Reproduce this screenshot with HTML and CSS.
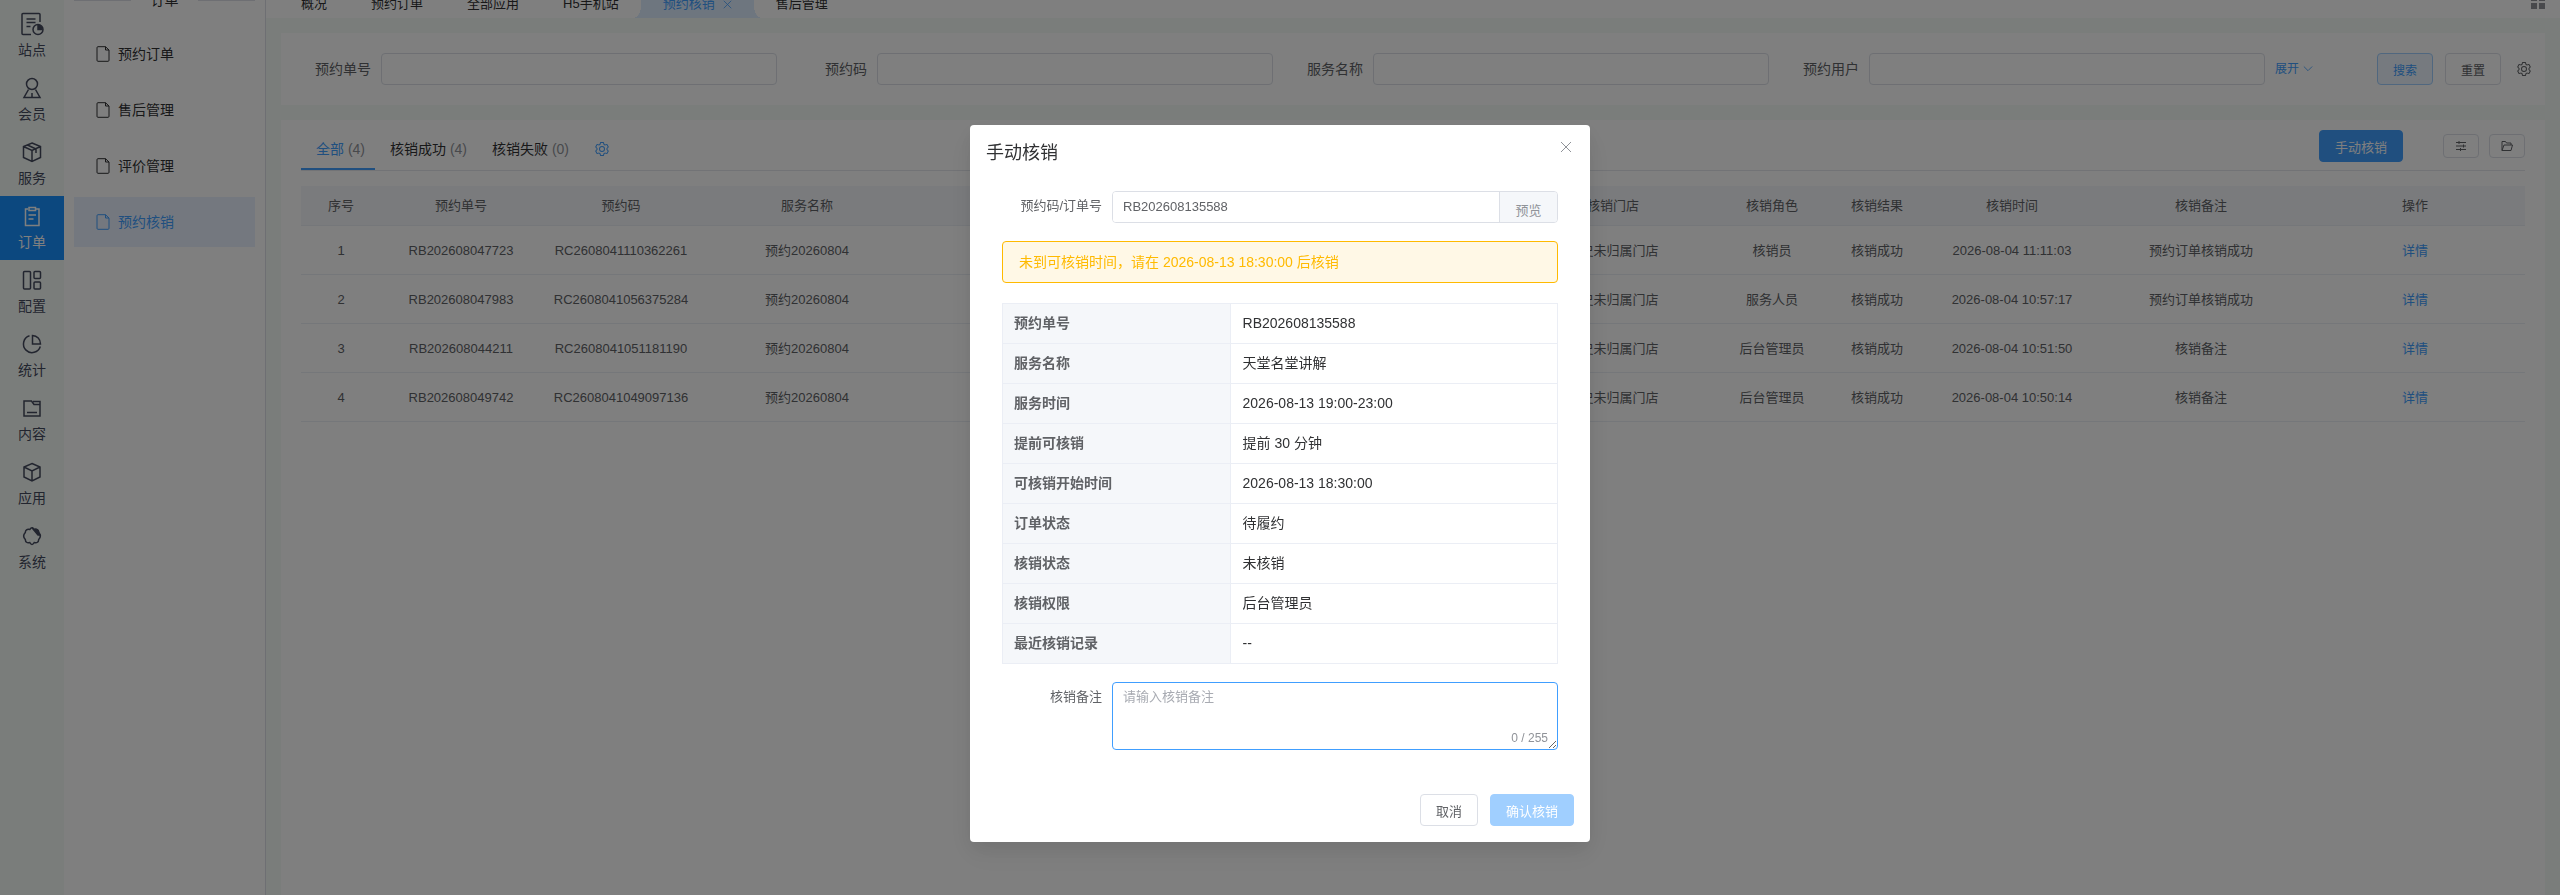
FILE: index.html
```html
<!DOCTYPE html>
<html lang="zh-CN">
<head>
    <meta charset="UTF-8">
    <meta name="viewport" content="width=device-width, initial-scale=1.0">
    <title>预约核销</title>
    <link rel="stylesheet" href="styles.css">
</head>
<body>
    <!-- shared icons -->
    <svg class="sprite" aria-hidden="true">
        <symbol id="i-doc" viewBox="0 0 16 16"><path d="M3 .700h7.500L14 4v10.300a1 1 0 0 1-1 1H3a1 1 0 0 1-1-1V1.700a1 1 0 0 1 1-1zM10.500 .700V4H14"/></symbol>
        <symbol id="i-gear" viewBox="64 64 896 896"><path d="M600.704 64a32 32 0 0 1 30.464 22.208l35.2 109.376c14.784 7.232 28.928 15.36 42.432 24.512l112.384-24.192a32 32 0 0 1 34.432 15.36L944.32 364.8a32 32 0 0 1-4.032 37.504l-77.12 85.12a357.12 357.12 0 0 1 0 49.024l77.12 85.248a32 32 0 0 1 4.032 37.504l-88.704 153.6a32 32 0 0 1-34.432 15.296L708.8 803.904c-13.44 9.088-27.648 17.28-42.368 24.512l-35.264 109.376A32 32 0 0 1 600.704 960H423.296a32 32 0 0 1-30.464-22.208L357.696 828.48a351.616 351.616 0 0 1-42.56-24.64l-112.32 24.256a32 32 0 0 1-34.432-15.36L79.68 659.2a32 32 0 0 1 4.032-37.504l77.12-85.248a357.12 357.12 0 0 1 0-48.896l-77.12-85.248A32 32 0 0 1 79.68 364.8l88.704-153.6a32 32 0 0 1 34.432-15.296l112.32 24.256c13.568-9.152 27.776-17.408 42.56-24.64l35.2-109.312A32 32 0 0 1 423.232 64H600.64zm-23.424 64H446.72l-36.352 113.088-24.512 11.968a294.113 294.113 0 0 0-34.816 20.096l-22.656 15.36-116.224-25.088-65.28 113.152 79.68 88.192-1.92 27.136a293.12 293.12 0 0 0 0 40.192l1.92 27.136-79.808 88.192 65.344 113.152 116.224-25.024 22.656 15.296a294.113 294.113 0 0 0 34.816 20.096l24.512 11.968L446.72 896h130.688l36.48-113.152 24.448-11.904a288.282 288.282 0 0 0 34.752-20.096l22.592-15.296 116.288 25.024 65.28-113.152-79.744-88.192 1.92-27.136a293.12 293.12 0 0 0 0-40.256l-1.92-27.136 79.808-88.128-65.344-113.152-116.288 24.96-22.592-15.232a287.616 287.616 0 0 0-34.752-20.096l-24.448-11.904L577.344 128zM512 320a192 192 0 1 1 0 384 192 192 0 0 1 0-384m0 64a128 128 0 1 0 0 256 128 128 0 0 0 0-256"/></symbol>
        <symbol id="i-close" viewBox="0 0 12 12"><path d="M1 1l10 10M11 1L1 11"/></symbol>
    </svg>

    <div class="layout">
        <nav class="rail">
            <a href="#" class="rail-item">
                <svg class="icon line" viewBox="0 0 24 24"><path d="M20 10V2.500a1 1 0 0 0-1-1H3a1 1 0 0 0-1 1v19a1 1 0 0 0 1 1h8M6.500 7h9M6.500 10.500h9M6.500 14.500h4"/><circle cx="18" cy="17.500" r="5"/><path d="M18 13.500v4h4A4 4 0 0 0 18 13.500z" fill="currentColor"/></svg>
                <span>站点</span>
            </a>
            <a href="#" class="rail-item">
                <svg class="icon line" viewBox="0 0 24 24"><circle cx="12" cy="8" r="5.500"/><path d="M8.500 13.500L4 21.500h16l-4.500-8M12 17v4"/></svg>
                <span>会员</span>
            </a>
            <a href="#" class="rail-item">
                <svg class="icon line" viewBox="0 0 24 24"><path d="M12 3l8.500 3.500v11L12 21.500l-8.500-4v-11zM3.500 6.500L12 10.500l8.500-4M12 10.500v11M7.500 5l8.500 4v4"/></svg>
                <span>服务</span>
            </a>
            <a href="#" class="rail-item active">
                <svg class="icon line" viewBox="0 0 24 24"><path d="M8 5H5.500v16.500h13.500V5h-3M9 3.500h6.500v3H9zM8.500 11h7.500M8.500 15h5"/></svg>
                <span>订单</span>
            </a>
            <a href="#" class="rail-item">
                <svg class="icon line" viewBox="0 0 24 24"><rect x="3.500" y="3.500" width="7" height="17.500" rx="1"/><rect x="14" y="3.500" width="6.500" height="7" rx="1"/><rect x="14" y="14" width="6.500" height="7" rx="1"/></svg>
                <span>配置</span>
            </a>
            <a href="#" class="rail-item">
                <svg class="icon line" viewBox="0 0 24 24"><path d="M9.500 3.800A8.600 8.600 0 1 0 20.300 14.500M12.500 3.500v8.500h8A8.300 8.300 0 0 0 12.500 3.500z"/></svg>
                <span>统计</span>
            </a>
            <a href="#" class="rail-item">
                <svg class="icon line" viewBox="0 0 24 24"><path d="M4 5h7.500l2.500 3.500h6V20H4zM13 5.500h7v3M7 16.500h10"/></svg>
                <span>内容</span>
            </a>
            <a href="#" class="rail-item">
                <svg class="icon line" viewBox="0 0 24 24"><path d="M12 3.500l8 3.500v10l-8 4-8-4V7zM4 7l8 4 8-4M12 11v10"/></svg>
                <span>应用</span>
            </a>
            <a href="#" class="rail-item">
                <svg class="icon line" viewBox="0 0 24 24"><path d="M9.800 5.500Q12 2 14.200 5.500Q18.500 4.600 18.700 8.500Q22 12 18.700 15.500Q18.500 19.500 14.200 18.500Q12 22.500 9.800 18.500Q5.500 19.500 5.300 15.500Q2 12 5.300 8.500Q5.500 4.600 9.800 5.500z"/><path d="M12 3.800L14.200 5.500Q18.500 4.600 18.700 8.500L20 11l-2 0z" fill="currentColor"/></svg>
                <span>系统</span>
            </a>
        </nav>

        <aside class="submenu">
            <div class="submenu-title">订单</div>
            <a href="#" class="submenu-item"><svg class="icon line"><use href="#i-doc"/></svg>预约订单</a>
            <a href="#" class="submenu-item"><svg class="icon line"><use href="#i-doc"/></svg>售后管理</a>
            <a href="#" class="submenu-item"><svg class="icon line"><use href="#i-doc"/></svg>评价管理</a>
            <a href="#" class="submenu-item active"><svg class="icon line"><use href="#i-doc"/></svg>预约核销</a>
        </aside>

        <main class="main">
            <div class="tags">
                <a href="#" class="tag">概况</a>
                <a href="#" class="tag">预约订单</a>
                <a href="#" class="tag">全部应用</a>
                <a href="#" class="tag">H5手机站</a>
                <a href="#" class="tag active">预约核销<svg class="icon line"><use href="#i-close"/></svg></a>
                <a href="#" class="tag">售后管理</a>
                <svg class="tags-grid" viewBox="0 0 14 14"><path d="M0 0h6v6H0zM8 0h6v6H8zM0 8h6v6H0zM8 8h6v6H8z"/></svg>
            </div>

            <form class="card search">
                <div class="search-fields">
                    <div class="field"><label for="s-no">预约单号</label><input id="s-no" type="text"></div>
                    <div class="field"><label for="s-code">预约码</label><input id="s-code" type="text"></div>
                    <div class="field"><label for="s-name">服务名称</label><input id="s-name" type="text"></div>
                    <div class="field"><label for="s-user">预约用户</label><input id="s-user" type="text"></div>
                </div>
                <div class="search-actions">
                    <a href="#" class="expand">展开<svg class="icon line" viewBox="0 0 12 12"><path d="M1 3l5 5 5-5"/></svg></a>
                    <button type="button" class="btn btn-search">搜索</button>
                    <button type="button" class="btn btn-reset">重置</button>
                    <svg class="icon gear"><use href="#i-gear"/></svg>
                </div>
            </form>

            <section class="card list">
                <div class="list-head">
                    <a href="#" class="list-tab active">全部 <em>(4)</em></a>
                    <a href="#" class="list-tab">核销成功 <em>(4)</em></a>
                    <a href="#" class="list-tab">核销失败 <em>(0)</em></a>
                    <svg class="icon tab-gear"><use href="#i-gear"/></svg>
                    <div class="list-tools">
                        <button type="button" class="btn btn-primary">手动核销</button>
                        <button type="button" class="btn btn-icon" aria-label="列设置">
                            <svg class="icon line" viewBox="0 0 12 12"><path d="M1 2.500h10M1 6h10M1 9.500h10M4 1v3M8.500 4.500v3M5.500 8v3"/></svg>
                        </button>
                        <button type="button" class="btn btn-icon" aria-label="导出记录">
                            <svg class="icon line" viewBox="0 0 12 12"><path d="M1 10.500V1.500h3.500l1 1.500H10v2M1 10.500L3 5h8.500l-1.500 5.500z"/></svg>
                        </button>
                    </div>
                </div>

                <table class="records">
                    <colgroup>
                        <col class="c-index"><col class="c-no"><col class="c-no"><col class="c-name">
                        <col>
                        <col class="c-store"><col class="c-role"><col class="c-result"><col class="c-time"><col class="c-remark"><col class="c-op">
                    </colgroup>
                    <thead>
                        <tr>
                            <th>序号</th><th>预约单号</th><th>预约码</th><th>服务名称</th><th></th>
                            <th>核销门店</th><th>核销角色</th><th>核销结果</th><th>核销时间</th><th>核销备注</th><th>操作</th>
                        </tr>
                    </thead>
                    <tbody>
                        <tr>
                            <td>1</td><td>RB202608047723</td><td>RC2608041110362261</td><td>预约20260804</td><td></td>
                            <td>历史未归属门店</td><td>核销员</td><td>核销成功</td><td>2026-08-04 11:11:03</td><td>预约订单核销成功</td><td><a href="#">详情</a></td>
                        </tr>
                        <tr>
                            <td>2</td><td>RB202608047983</td><td>RC2608041056375284</td><td>预约20260804</td><td></td>
                            <td>历史未归属门店</td><td>服务人员</td><td>核销成功</td><td>2026-08-04 10:57:17</td><td>预约订单核销成功</td><td><a href="#">详情</a></td>
                        </tr>
                        <tr>
                            <td>3</td><td>RB202608044211</td><td>RC2608041051181190</td><td>预约20260804</td><td></td>
                            <td>历史未归属门店</td><td>后台管理员</td><td>核销成功</td><td>2026-08-04 10:51:50</td><td>核销备注</td><td><a href="#">详情</a></td>
                        </tr>
                        <tr>
                            <td>4</td><td>RB202608049742</td><td>RC2608041049097136</td><td>预约20260804</td><td></td>
                            <td>历史未归属门店</td><td>后台管理员</td><td>核销成功</td><td>2026-08-04 10:50:14</td><td>核销备注</td><td><a href="#">详情</a></td>
                        </tr>
                    </tbody>
                </table>
            </section>
        </main>
    </div>

    <div class="overlay">
        <div class="dialog" role="dialog" aria-labelledby="dialog-title">
            <header class="dialog-head">
                <h2 id="dialog-title">手动核销</h2>
                <button type="button" class="dialog-close" aria-label="关闭"><svg class="icon line"><use href="#i-close"/></svg></button>
            </header>
            <div class="dialog-body">
                <div class="form-row">
                    <label for="code">预约码/订单号</label>
                    <div class="input-group">
                        <input id="code" type="text" value="RB202608135588">
                        <button type="button">预览</button>
                    </div>
                </div>

                <div class="alert">未到可核销时间，请在 2026-08-13 18:30:00 后核销</div>

                <table class="detail">
                    <tr><th>预约单号</th><td>RB202608135588</td></tr>
                    <tr><th>服务名称</th><td>天堂名堂讲解</td></tr>
                    <tr><th>服务时间</th><td>2026-08-13 19:00-23:00</td></tr>
                    <tr><th>提前可核销</th><td>提前 30 分钟</td></tr>
                    <tr><th>可核销开始时间</th><td>2026-08-13 18:30:00</td></tr>
                    <tr><th>订单状态</th><td>待履约</td></tr>
                    <tr><th>核销状态</th><td>未核销</td></tr>
                    <tr><th>核销权限</th><td>后台管理员</td></tr>
                    <tr><th>最近核销记录</th><td>--</td></tr>
                </table>

                <div class="form-row">
                    <label for="remark">核销备注</label>
                    <div class="textarea-wrap">
                        <textarea id="remark" maxlength="255" placeholder="请输入核销备注"></textarea>
                        <span class="count">0 / 255</span>
                    </div>
                </div>
            </div>
            <footer class="dialog-foot">
                <button type="button" class="btn">取消</button>
                <button type="button" class="btn btn-disabled" disabled>确认核销</button>
            </footer>
        </div>
    </div>
</body>
</html>
```

FILE: styles.css
```css
* {
    box-sizing: border-box;
}
body {
    margin: 0;
    font-family: "Liberation Sans", "Noto Sans CJK SC", sans-serif;
    font-size: 14px;
    line-height: 20px;
    color: #303133;
    background: #f5faf7;
    overflow: hidden;
}
a {
    color: inherit;
    text-decoration: none;
}
button, input, textarea {
    font-family: inherit;
    font-size: 13px;
    margin: 0;
    outline: none;
}
.sprite {
    display: none;
}
.icon {
    display: block;
    width: 16px;
    height: 16px;
    flex: none;
    fill: currentColor;
}
.line {
    fill: none;
    stroke: currentColor;
}

.layout {
    display: flex;
    height: 100vh;
    overflow: hidden;
}

/* left icon rail */
.rail {
    flex: 0 0 64px;
    padding-top: 4px;
}
.rail-item {
    display: flex;
    flex-direction: column;
    align-items: center;
    gap: 4px;
    height: 64px;
    padding-top: 8px;
    color: #454b5e;
}
.rail-item .icon {
    width: 24px;
    height: 24px;
    stroke-width: 1.5;
}
.rail-item.active {
    background: #1890ff;
    color: #fff;
}

/* second level menu */
.submenu {
    flex: 0 0 202px;
    padding: 0 10px;
    background: #fff;
    border-right: 1px solid #dcdfe6;
}
.submenu-title {
    display: flex;
    align-items: center;
    justify-content: space-between;
    height: 28px;
    margin-top: -14px;
    margin-bottom: 15px;
}
.submenu-title::before,
.submenu-title::after {
    content: "";
    width: 57px;
    height: 1px;
    background: #dcdfe6;
}
.submenu-item {
    display: flex;
    align-items: center;
    gap: 7px;
    height: 50px;
    margin-bottom: 6px;
    padding-left: 21px;
}
.submenu-item.active {
    background: #e8f1ff;
    color: #409eff;
}

.main {
    flex: 1;
    min-width: 0;
    display: flex;
    flex-direction: column;
}

/* opened pages */
.tags {
    display: flex;
    align-items: center;
    height: 28px;
    margin-top: -10px;
    padding: 0 15px 0 13px;
    background: #fff;
    font-size: 13px;
}
.tag {
    position: relative;
    display: flex;
    align-items: center;
    gap: 8px;
    height: 28px;
    padding: 0 22px;
}
.tag .icon {
    width: 9px;
    height: 9px;
}
.tag.active {
    background: #dcecff;
    color: #409eff;
}
.tag.active::before,
.tag.active::after {
    content: "";
    position: absolute;
    bottom: 0;
    width: 8px;
    height: 12px;
}
.tag.active::before {
    right: 100%;
    background: radial-gradient(ellipse 8px 12px at 0 0, transparent 98%, #dcecff);
}
.tag.active::after {
    left: 100%;
    background: radial-gradient(ellipse 8px 12px at 100% 0, transparent 98%, #dcecff);
}
.tags-grid {
    width: 14px;
    height: 14px;
    margin-left: auto;
    margin-bottom: 4px;
    fill: #909399;
}

.card {
    margin: 15px 15px 0;
    background: #fff;
}

/* search bar */
.search {
    display: flex;
    height: 72px;
    padding: 20px 14px 20px 20px;
}
.search-fields {
    flex: 1;
    display: grid;
    grid-template-columns: repeat(4, 1fr);
    gap: 20px;
}
.field {
    display: flex;
}
.field label {
    flex: 0 0 80px;
    padding-right: 10px;
    line-height: 32px;
    text-align: right;
    color: #606266;
}
.field input {
    flex: 1;
    min-width: 0;
    height: 32px;
    border: 1px solid #dcdfe6;
    border-radius: 4px;
    background: #fff;
}
.search-actions {
    flex: 0 0 266px;
    display: flex;
    align-items: center;
    gap: 12px;
    padding-left: 10px;
    font-size: 12px;
}
.expand {
    display: flex;
    align-items: center;
    gap: 4px;
    margin-right: auto;
    color: #409eff;
}
.expand .icon {
    width: 10px;
    height: 10px;
}
.gear {
    width: 14px;
    height: 14px;
    margin-left: 4px;
    color: #606266;
}

.btn {
    height: 32px;
    padding: 1px 15px 0;
    border: 1px solid #dcdfe6;
    border-radius: 4px;
    background: #fff;
    color: #606266;
    font-size: 13px;
}
.search .btn {
    width: 56px;
    font-size: 12px;
}
.btn-search {
    border-color: #a0cfff;
    background: #ecf5ff;
    color: #409eff;
}
.search .btn-reset {
    color: #606266;
}
.btn-primary {
    border-color: #409eff;
    background: #409eff;
    color: #fff;
}
.btn-disabled {
    border-color: #a0cfff;
    background: #a0cfff;
    color: #fff;
}

/* record list */
.list {
    flex: 1;
    padding: 0 20px;
}
.list-head {
    display: flex;
    align-items: center;
    height: 51px;
    margin-bottom: 15px;
    border-bottom: 1px solid #e4e7ed;
}
.list-tab {
    height: 50px;
    padding: 8px 10px 0 15px;
    line-height: 42px;
}
.list-tab em {
    font-style: normal;
    color: #909399;
}
.list-tab.active {
    border-bottom: 2px solid #409eff;
    color: #409eff;
}
.tab-gear {
    width: 14px;
    height: 14px;
    margin: 8px 0 0 16px;
    color: #409eff;
}
.list-tools {
    display: flex;
    align-items: center;
    gap: 10px;
    margin-left: auto;
    padding-top: 2px;
}
.list-tools .btn-primary {
    margin-right: 30px;
}
.btn-icon {
    display: flex;
    align-items: center;
    justify-content: center;
    width: 36px;
    height: 24px;
    padding: 0;
}
.btn-icon .icon {
    width: 12px;
    height: 12px;
}

.records {
    width: 100%;
    table-layout: fixed;
    border-collapse: separate;
    border-spacing: 0;
    font-size: 13px;
    color: #606266;
}
.c-index { width: 80px; }
.c-no { width: 160px; }
.c-name { width: 212px; }
.c-store { width: 208px; }
.c-role { width: 110px; }
.c-result { width: 100px; }
.c-time { width: 170px; }
.c-remark { width: 208px; }
.c-op { width: 220px; }
.records th,
.records td {
    height: 49px;
    padding: 2px 0 0;
    border-bottom: 1px solid #ebeef5;
    text-align: center;
    font-weight: normal;
}
.records th {
    height: 40px;
    padding: 0;
    background: #f5f7fa;
}
.records a {
    color: #409eff;
}

/* dialog */
.overlay {
    position: fixed;
    inset: 0;
    padding-top: 14vh;
    background: rgba(0, 0, 0, .5);
}
.dialog {
    width: 620px;
    margin: 0 auto;
    padding: 16px;
    border-radius: 4px;
    background: #fff;
    box-shadow: 0 12px 32px 4px rgba(0, 0, 0, .04), 0 8px 20px rgba(0, 0, 0, .08);
}
.dialog-head {
    display: flex;
    justify-content: space-between;
    margin-bottom: 26px;
}
.dialog-head h2 {
    margin: 0;
    font-size: 18px;
    font-weight: normal;
    line-height: 24px;
}
.dialog-close {
    width: 16px;
    height: 12px;
    padding: 0 2px;
    border: 0;
    background: none;
    color: #909399;
}
.dialog-close .icon {
    width: 12px;
    height: 12px;
}
.dialog-body {
    padding: 0 16px;
}
.form-row {
    display: flex;
}
.form-row label {
    flex: 0 0 110px;
    padding-right: 10px;
    line-height: 30px;
    text-align: right;
    font-size: 13px;
    color: #606266;
}
.input-group {
    flex: 1;
    display: flex;
    height: 32px;
    border: 1px solid #dcdfe6;
    border-radius: 4px;
    overflow: hidden;
}
.input-group input {
    flex: 1;
    min-width: 0;
    padding: 0 10px 2px;
    border: 0;
    color: #606266;
}
.input-group button {
    width: 58px;
    padding: 4px 0 0;
    border: 0;
    border-left: 1px solid #dcdfe6;
    background: #f5f7fa;
    color: #909399;
}
.alert {
    margin: 18px 0 20px;
    padding: 10px 16px;
    border: 1px solid #ffba00;
    border-radius: 4px;
    background: #fff8e6;
    color: #ffba00;
}
.detail {
    width: 100%;
    margin-bottom: 18px;
    table-layout: fixed;
    border-collapse: collapse;
}
.detail th,
.detail td {
    height: 40px;
    padding: 0 12px 2px;
    border: 1px solid #ebeef5;
    text-align: left;
}
.detail th {
    width: 41%;
    padding-left: 11px;
    background: #f5f7fa;
    color: #606266;
    font-weight: 700;
}
.textarea-wrap {
    flex: 1;
    position: relative;
}
.textarea-wrap textarea {
    display: block;
    width: 100%;
    height: 68px;
    padding: 4px 10px;
    border: 1px solid #409eff;
    border-radius: 4px;
    line-height: 20px;
    resize: vertical;
}
.textarea-wrap textarea::placeholder {
    color: #a8abb2;
}
.count {
    position: absolute;
    right: 10px;
    bottom: 2px;
    font-size: 12px;
    color: #909399;
}
.dialog-foot {
    display: flex;
    justify-content: flex-end;
    gap: 12px;
    padding-top: 44px;
}
```
